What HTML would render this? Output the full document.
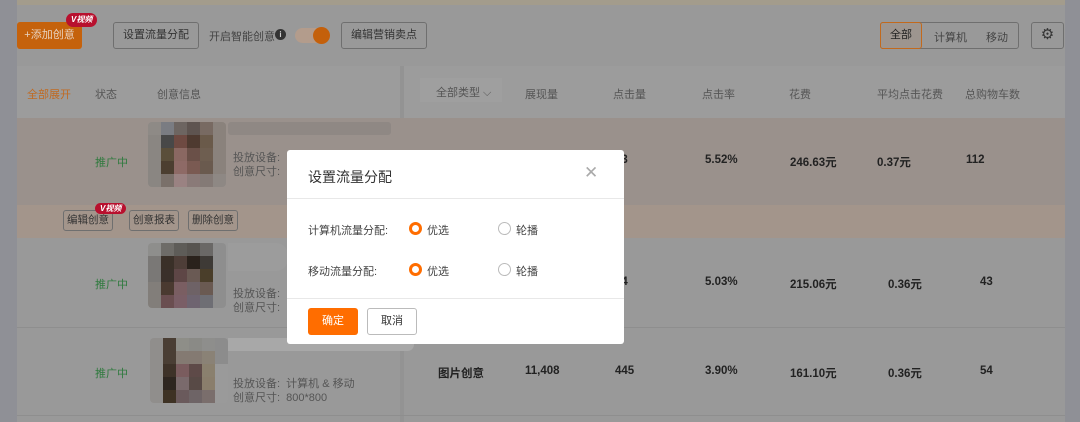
<!DOCTYPE html>
<html><head><meta charset="utf-8"><style>
*{margin:0;padding:0;box-sizing:border-box}
body{width:1080px;height:422px;overflow:hidden;background:#8f9096;font-family:"Liberation Sans","Noto Sans CJK SC",sans-serif;font-size:11px;color:#4a4a4a;position:relative}
.a{position:absolute}
.main{left:17px;top:0;width:1048px;height:422px;background:#999}
.btn{position:absolute;border:1px solid #6f6f6f;border-radius:3px;height:27px;line-height:25px;font-size:11px;color:#333;padding:0 9px}
.hd{color:#555;font-size:11px}
.b{font-weight:bold;color:#222;font-size:11.5px}
.g{color:#2f7a3e;font-size:11px}
.px{position:absolute;display:grid;grid-template-columns:repeat(6,13px);grid-auto-rows:13px;border-radius:4px;overflow:hidden}
.vtag{position:absolute;background:#b8102e;color:#fff;font-size:8px;font-weight:bold;border-radius:7px;height:14px;line-height:14px;padding:0 5px;font-style:italic}
.radio{position:absolute;width:13px;height:13px;border-radius:50%}
.on{border:3.5px solid #ff6d00;background:#fff}
.off{border:1px solid #bbb;background:#fff}
</style></head><body>
<div class="a main"></div>
<div class="a" style="left:17px;top:0;width:1048px;height:5px;background:#a39c8c"></div>
<!-- toolbar -->
<div class="a" style="left:17px;top:22px;width:65px;height:27px;background:#c5620c;border-radius:3px;color:#e8d3c0;line-height:27px;text-align:center">+添加创意</div>
<div class="vtag" style="left:66px;top:13px">V视频</div>
<div class="btn" style="left:113px;top:22px">设置流量分配</div>
<div class="a" style="left:209px;top:28px;color:#444">开启智能创意</div>
<div class="a" style="left:275px;top:29px;width:11px;height:11px;border-radius:50%;background:#333;color:#ccc;font-size:8px;text-align:center;line-height:11px;font-weight:bold">i</div>
<div class="a" style="left:295px;top:28px;width:35px;height:15px;border-radius:8px;background:#b39c8c"></div>
<div class="a" style="left:313px;top:27px;width:17px;height:17px;border-radius:50%;background:#c4600b"></div>
<div class="btn" style="left:341px;top:22px">编辑营销卖点</div>
<div class="a" style="left:880px;top:22px;width:139px;height:27px;border:1px solid #6f6f6f;border-radius:3px"></div>
<div class="a" style="left:880px;top:22px;width:42px;height:27px;border:1px solid #c2691c;border-radius:3px;background:#9d958f;text-align:center;line-height:25px;color:#222">全部</div>
<div class="a" style="left:934px;top:29px;color:#444">计算机</div>
<div class="a" style="left:986px;top:29px;color:#444">移动</div>
<div class="a" style="left:1031px;top:22px;width:33px;height:27px;border:1px solid #6f6f6f;border-radius:3px;text-align:center;line-height:24px;font-size:15px;color:#333">⚙</div>
<!-- header -->
<div class="a" style="left:17px;top:66px;width:1048px;height:52px;background:#9c9c9c"></div>
<div class="a" style="left:400px;top:66px;width:4px;height:356px;background:#939393"></div>
<div class="a" style="left:27px;top:86px;color:#c06a22">全部展开</div>
<div class="a hd" style="left:95px;top:86px">状态</div>
<div class="a hd" style="left:157px;top:86px">创意信息</div>
<div class="a" style="left:420px;top:78px;width:82px;height:24px;background:#9f9f9f"></div>
<div class="a hd" style="left:436px;top:84px">全部类型 ⌵</div>
<div class="a hd" style="left:525px;top:86px">展现量</div>
<div class="a hd" style="left:613px;top:86px">点击量</div>
<div class="a hd" style="left:702px;top:86px">点击率</div>
<div class="a hd" style="left:789px;top:86px">花费</div>
<div class="a hd" style="left:877px;top:86px">平均点击花费</div>
<div class="a hd" style="left:965px;top:86px">总购物车数</div>
<!-- row1 -->
<div class="a" style="left:17px;top:118px;width:1048px;height:87px;background:#9a918c"></div>
<div class="a" style="left:17px;top:205px;width:1048px;height:33px;background:#a3958b"></div>
<div class="a g" style="left:95px;top:154px">推广中</div>
<div class="px" style="left:148px;top:122px">
<i style="background:#8e8a86"></i><i style="background:#7a7c82"></i><i style="background:#6d6561"></i><i style="background:#5e5450"></i><i style="background:#786a62"></i><i style="background:#8a827c"></i>
<i style="background:#8a8682"></i><i style="background:#484848"></i><i style="background:#6e4a42"></i><i style="background:#4e3a30"></i><i style="background:#6a5a4a"></i><i style="background:#8a827c"></i>
<i style="background:#8a8682"></i><i style="background:#5a4e3a"></i><i style="background:#8a6862"></i><i style="background:#6a5048"></i><i style="background:#6e5e50"></i><i style="background:#8a827c"></i>
<i style="background:#8a8682"></i><i style="background:#4c3e30"></i><i style="background:#8e6a66"></i><i style="background:#7a5a52"></i><i style="background:#6a5a4e"></i><i style="background:#8a827c"></i>
<i style="background:#8a8682"></i><i style="background:#7a706a"></i><i style="background:#9a8282"></i><i style="background:#8a7a78"></i><i style="background:#847a76"></i><i style="background:#8e8884"></i></div>
<div class="a" style="left:228px;top:122px;width:163px;height:13px;background:#8f8884;border-radius:3px"></div>
<div class="a" style="left:233px;top:149px;color:#555">投放设备:</div>
<div class="a" style="left:233px;top:163px;color:#555">创意尺寸:</div>
<div class="a b" style="left:615px;top:154px">53</div>
<div class="a b" style="left:705px;top:154px">5.52%</div>
<div class="a b" style="left:790px;top:154px">246.63元</div>
<div class="a b" style="left:877px;top:154px">0.37元</div>
<div class="a b" style="left:966px;top:154px">112</div>
<div class="btn" style="left:63px;top:210px;height:21px;line-height:19px;padding:0 3px;font-size:10.5px">编辑创意</div>
<div class="vtag" style="left:95px;top:203px;height:11px;line-height:11px">V视频</div>
<div class="btn" style="left:129px;top:210px;height:21px;line-height:19px;padding:0 3px;font-size:10.5px">创意报表</div>
<div class="btn" style="left:188px;top:210px;height:21px;line-height:19px;padding:0 3px;font-size:10.5px">删除创意</div>
<!-- row2 -->
<div class="a" style="left:17px;top:327px;width:1048px;height:1px;background:#8e8e8e"></div>
<div class="a" style="left:17px;top:415px;width:1048px;height:1px;background:#8e8e8e"></div>
<div class="a g" style="left:95px;top:276px">推广中</div>
<div class="px" style="left:148px;top:243px">
<i style="background:#8e8e8c"></i><i style="background:#6e6c68"></i><i style="background:#5e5c58"></i><i style="background:#575450"></i><i style="background:#6a6866"></i><i style="background:#8e8e8e"></i>
<i style="background:#7a7876"></i><i style="background:#3a3028"></i><i style="background:#4e3e38"></i><i style="background:#2a221c"></i><i style="background:#3e3a36"></i><i style="background:#8e8e8e"></i>
<i style="background:#7a7876"></i><i style="background:#3a302a"></i><i style="background:#5e4646"></i><i style="background:#6a5a54"></i><i style="background:#4a3e2a"></i><i style="background:#8e8e8e"></i>
<i style="background:#827e7a"></i><i style="background:#4a3a30"></i><i style="background:#7a5e62"></i><i style="background:#6e6266"></i><i style="background:#6a5a52"></i><i style="background:#8e8e8e"></i>
<i style="background:#827e7a"></i><i style="background:#6a4e50"></i><i style="background:#7a5e66"></i><i style="background:#6e6470"></i><i style="background:#6e6e74"></i><i style="background:#8e8e8e"></i></div>
<div class="a" style="left:228px;top:243px;width:60px;height:28px;background:#9c9c9c;border-radius:0 12px 12px 0"></div>
<div class="a" style="left:233px;top:285px;color:#555">投放设备:</div>
<div class="a" style="left:233px;top:299px;color:#555">创意尺寸:</div>
<div class="a b" style="left:615px;top:276px">04</div>
<div class="a b" style="left:705px;top:276px">5.03%</div>
<div class="a b" style="left:790px;top:276px">215.06元</div>
<div class="a b" style="left:888px;top:276px">0.36元</div>
<div class="a b" style="left:980px;top:276px">43</div>
<!-- row3 -->
<div class="a g" style="left:95px;top:365px">推广中</div>
<div class="px" style="left:150px;top:338px">
<i style="background:#908e8c"></i><i style="background:#4a3e34"></i><i style="background:#8e8e88"></i><i style="background:#8a8a86"></i><i style="background:#8e8e8c"></i><i style="background:#8c8c8c"></i>
<i style="background:#908e8c"></i><i style="background:#4a3e34"></i><i style="background:#847a72"></i><i style="background:#847a72"></i><i style="background:#8a8276"></i><i style="background:#8c8c8c"></i>
<i style="background:#908e8c"></i><i style="background:#3e3228"></i><i style="background:#7a5c5e"></i><i style="background:#5e4a48"></i><i style="background:#8a806e"></i><i style="background:#9a9a9a"></i>
<i style="background:#908e8c"></i><i style="background:#2e2620"></i><i style="background:#7a6a6c"></i><i style="background:#584a46"></i><i style="background:#8a7e6c"></i><i style="background:#9a9a9a"></i>
<i style="background:#908e8c"></i><i style="background:#3e3224"></i><i style="background:#6a5a5c"></i><i style="background:#6e6466"></i><i style="background:#7a6e6c"></i><i style="background:#9a9a9a"></i></div>
<div class="a" style="left:228px;top:338px;width:186px;height:13px;background:#a8a8a8;border-radius:0 7px 7px 0"></div>
<div class="a" style="left:233px;top:375px;color:#555">投放设备:&nbsp;&nbsp;计算机 &amp; 移动</div>
<div class="a" style="left:233px;top:389px;color:#555">创意尺寸:&nbsp;&nbsp;800*800</div>
<div class="a b" style="left:438px;top:365px">图片创意</div>
<div class="a b" style="left:525px;top:365px">11,408</div>
<div class="a b" style="left:615px;top:365px">445</div>
<div class="a b" style="left:705px;top:365px">3.90%</div>
<div class="a b" style="left:790px;top:365px">161.10元</div>
<div class="a b" style="left:888px;top:365px">0.36元</div>
<div class="a b" style="left:980px;top:365px">54</div>
<!-- dialog -->
<div class="a" style="left:287px;top:150px;width:337px;height:194px;background:#fff;border-radius:3px">
<div class="a" style="left:21px;top:17px;font-size:14px;color:#333">设置流量分配</div>
<div class="a" style="left:297px;top:13px;font-size:17px;color:#aaa">✕</div>
<div class="a" style="left:0;top:48px;width:337px;height:1px;background:#e8e8e8"></div>
<div class="a" style="left:21px;top:72px;color:#444">计算机流量分配:</div>
<div class="radio on" style="left:122px;top:72px"></div>
<div class="a" style="left:140px;top:72px;color:#444">优选</div>
<div class="radio off" style="left:211px;top:72px"></div>
<div class="a" style="left:229px;top:72px;color:#444">轮播</div>
<div class="a" style="left:21px;top:113px;color:#444">移动流量分配:</div>
<div class="radio on" style="left:122px;top:113px"></div>
<div class="a" style="left:140px;top:113px;color:#444">优选</div>
<div class="radio off" style="left:211px;top:113px"></div>
<div class="a" style="left:229px;top:113px;color:#444">轮播</div>
<div class="a" style="left:0;top:148px;width:337px;height:1px;background:#e8e8e8"></div>
<div class="a" style="left:21px;top:158px;width:50px;height:27px;background:#ff6d00;border-radius:3px;color:#fff;text-align:center;line-height:27px">确定</div>
<div class="a" style="left:80px;top:158px;width:50px;height:27px;border:1px solid #bbb;border-radius:3px;color:#333;text-align:center;line-height:25px">取消</div>
</div>
</body></html>
